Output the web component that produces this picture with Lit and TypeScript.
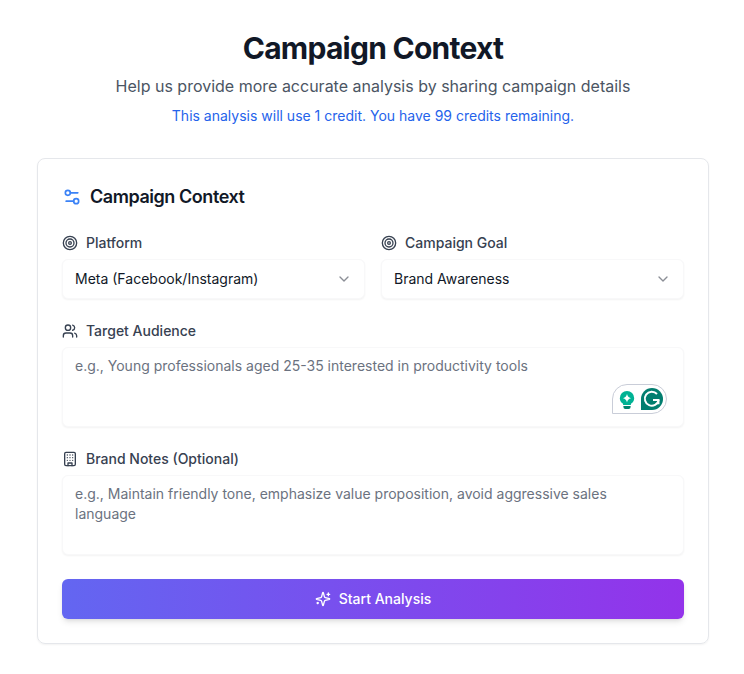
import { LitElement, html, css, svg } from "lit";
import { customElement, property, state } from "lit/decorators.js";

const icons: Record<string, unknown> = {
  settings: svg`<path d="M14 17H5"/><path d="M19 7h-9"/><circle cx="17" cy="17" r="3"/><circle cx="7" cy="7" r="3"/>`,
  target: svg`<circle cx="12" cy="12" r="10"/><circle cx="12" cy="12" r="6"/><circle cx="12" cy="12" r="2"/>`,
  users: svg`<path d="M16 21v-2a4 4 0 0 0-4-4H6a4 4 0 0 0-4 4v2"/><circle cx="9" cy="7" r="4"/><path d="M22 21v-2a4 4 0 0 0-3-3.87"/><path d="M16 3.13a4 4 0 0 1 0 7.75"/>`,
  building: svg`<rect width="16" height="20" x="4" y="2" rx="2" ry="2"/><path d="M9 22v-4h6v4"/><path d="M8 6h.01"/><path d="M16 6h.01"/><path d="M12 6h.01"/><path d="M12 10h.01"/><path d="M12 14h.01"/><path d="M16 10h.01"/><path d="M16 14h.01"/><path d="M8 10h.01"/><path d="M8 14h.01"/>`,
  chevron: svg`<path d="m6 9 6 6 6-6"/>`,
  sparkles: svg`<path d="M9.937 15.5A2 2 0 0 0 8.5 14.063l-6.135-1.582a.5.5 0 0 1 0-.962L8.5 9.936A2 2 0 0 0 9.937 8.5l1.582-6.135a.5.5 0 0 1 .963 0L14.063 8.5A2 2 0 0 0 15.5 9.937l6.135 1.581a.5.5 0 0 1 0 .964L15.5 14.063a2 2 0 0 0-1.437 1.437l-1.582 6.135a.5.5 0 0 1-.963 0z"/><path d="M20 3v4"/><path d="M22 5h-4"/><path d="M4 17v2"/><path d="M5 18H3"/>`,
};

@customElement("line-icon")
class LineIcon extends LitElement {
  @property() name = "";

  static styles = css`
    :host { display: block; flex: none; width: 16px; height: 16px; }
    .glyph {
      display: block; width: 100%; height: 100%; fill: none; stroke: currentColor;
      stroke-width: 2; stroke-linecap: round; stroke-linejoin: round;
    }
  `;

  render() {
    return html`<svg class="glyph" viewBox="0 0 24 24" aria-hidden="true">${icons[this.name]}</svg>`;
  }
}

@customElement("writing-assistant")
class WritingAssistant extends LitElement {
  static styles = css`
    :host { display: block; }
    .pill {
      box-sizing: border-box; display: flex; align-items: center; justify-content: center; gap: 3px;
      width: 55px; height: 30px; background: #fff;
      border: 1px solid #c9cdd8; border-radius: 15px 15px 15px 0;
    }
    .action { display: block; width: 22px; height: 22px; padding: 0; border: 0; background: none; }
    .art { display: block; width: 22px; height: 22px; }
  `;

  render() {
    return html`
      <div class="pill">
        <button class="action" type="button" aria-label="Suggestions">
          <svg class="art" viewBox="0 0 22 22">
            <path fill="#00b294" d="M11 3a7.200 7.200 0 0 0-7.200 7.200c0 2.600 1.400 4.200 3 5.400l.6 2h7.200l.6-2c1.600-1.200 3-2.800 3-5.400A7.200 7.200 0 0 0 11 3z"/>
            <path fill="#fff" d="M11 6c.6 2.500 1.600 3.500 4 4.200-2.400.7-3.400 1.700-4 4.200-.6-2.500-1.600-3.500-4-4.200 2.400-.7 3.400-1.700 4-4.200z"/>
            <path fill="#fff" d="M7 17h8v1H7z"/>
            <path fill="#00826e" d="M7.400 18h7.200v1a2 2 0 0 1-2 2H9.400a2 2 0 0 1-2-2z"/>
          </svg>
        </button>
        <button class="action" type="button" aria-label="Open writing assistant">
          <svg class="art" viewBox="0 0 22 22">
            <path fill="#027e6f" d="M11 0a11 11 0 0 1 0 22H0V11A11 11 0 0 1 11 0z"/>
            <path fill="none" stroke="#fff" stroke-width="1.900" d="M16 6A7 7 0 1 0 17.700 12"/>
            <path fill="none" stroke="#fff" stroke-width="1.900" d="M12 12h6.500M17.500 12v4.300"/>
          </svg>
        </button>
      </div>
    `;
  }
}

@customElement("app-root")
class AppRoot extends LitElement {
  @state() credits = 99;

  static styles = css`
    :host {
      display: block; padding: 30px 35px 30px 37px; background: #fff; color: #111827;
      font-family: Inter, "Liberation Sans", sans-serif; font-size: 14px; line-height: 20px;
    }
    .page { max-width: 672px; margin: 0 auto; }
    .intro { display: grid; gap: 8px; margin-bottom: 32px; text-align: center; }
    .title, .lead, .credits, .heading { margin: 0; }
    .title { font-size: 30px; line-height: 36px; font-weight: 700; letter-spacing: -0.025em; }
    .lead { font-size: 16px; line-height: 24px; color: #4b5563; }
    .credits { color: #2563eb; }
    .card {
      display: grid; gap: 24px; padding: 24px; border: 1px solid #e5e7eb;
      border-radius: 8px; box-shadow: 0 1px 2px rgba(0, 0, 0, 0.05);
    }
    .card-head { display: flex; align-items: center; gap: 8px; }
    .card-head line-icon { width: 20px; height: 20px; color: #3b82f6; }
    .heading { font-size: 18px; line-height: 28px; font-weight: 600; letter-spacing: -0.025em; }
    .pair { display: grid; grid-template-columns: 1fr 1fr; gap: 16px; }
    .field { display: grid; gap: 8px; min-width: 0; }
    .label { display: flex; align-items: center; gap: 8px; line-height: 16px; font-weight: 500; color: #374151; }
    .control { position: relative; }
    .input {
      box-sizing: border-box; display: block; width: 100%; margin: 0; padding: 8px 12px;
      border: 1px solid #f8f8f9; border-radius: 6px; background: #fff; color: #111827;
      font: inherit; box-shadow: 0 1px 2px rgba(0, 0, 0, 0.05);
    }
    .select { appearance: none; height: 40px; padding-right: 40px; }
    .area { height: 80px; resize: none; }
    .area::placeholder { color: #6b7280; opacity: 1; }
    .chevron { position: absolute; right: 13px; top: 12px; color: #8b8e96; pointer-events: none; }
    .assistant { position: absolute; right: 17px; bottom: 13px; }
    .submit {
      display: flex; align-items: center; justify-content: center; gap: 8px; height: 40px;
      padding: 0 16px; border: 0; border-radius: 6px; color: #fff; font: inherit; font-weight: 500;
      background: linear-gradient(to right, #6366f1, #9333ea);
      box-shadow: 0 4px 6px -1px rgba(0, 0, 0, 0.1), 0 2px 4px -2px rgba(0, 0, 0, 0.1);
    }
  `;

  private selectField(id: string, label: string, options: string[]) {
    return html`
      <div class="field">
        <label class="label" for=${id}><line-icon name="target"></line-icon>${label}</label>
        <div class="control">
          <select class="input select" id=${id}>
            ${options.map((option) => html`<option>${option}</option>`)}
          </select>
          <line-icon class="chevron" name="chevron"></line-icon>
        </div>
      </div>
    `;
  }

  private textField(id: string, label: string, icon: string, placeholder: string, extra: unknown = null) {
    return html`
      <div class="field">
        <label class="label" for=${id}><line-icon name=${icon}></line-icon>${label}</label>
        <div class="control">
          <textarea class="input area" id=${id} placeholder=${placeholder}></textarea>
          ${extra}
        </div>
      </div>
    `;
  }

  render() {
    return html`
      <main class="page">
        <header class="intro">
          <h1 class="title">Campaign Context</h1>
          <p class="lead">Help us provide more accurate analysis by sharing campaign details</p>
          <p class="credits">This analysis will use 1 credit. You have ${this.credits} credits remaining.</p>
        </header>
        <form class="card" @submit=${(event: Event) => event.preventDefault()}>
          <div class="card-head">
            <line-icon name="settings"></line-icon>
            <h2 class="heading">Campaign Context</h2>
          </div>
          <div class="pair">
            ${this.selectField("platform", "Platform", ["Meta (Facebook/Instagram)"])}
            ${this.selectField("goal", "Campaign Goal", ["Brand Awareness"])}
          </div>
          ${this.textField("audience", "Target Audience", "users",
            "e.g., Young professionals aged 25-35 interested in productivity tools",
            html`<writing-assistant class="assistant"></writing-assistant>`)}
          ${this.textField("notes", "Brand Notes (Optional)", "building",
            "e.g., Maintain friendly tone, emphasize value proposition, avoid aggressive sales language")}
          <button class="submit" type="submit"><line-icon name="sparkles"></line-icon>Start Analysis</button>
        </form>
      </main>
    `;
  }
}
